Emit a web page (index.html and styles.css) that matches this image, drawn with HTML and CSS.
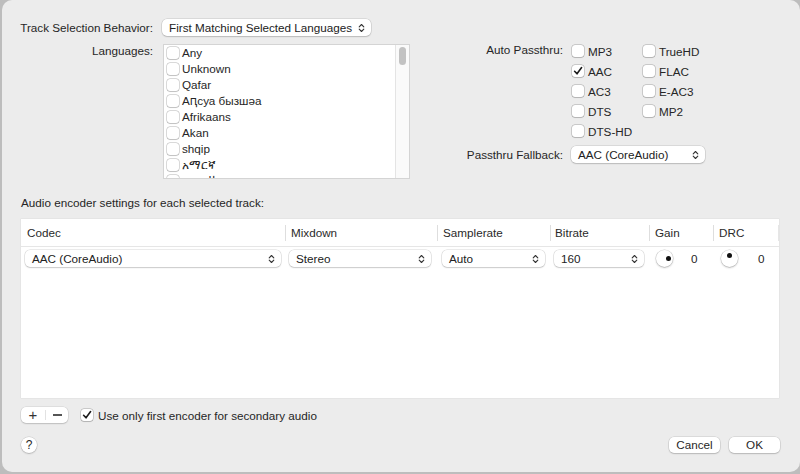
FILE: index.html
```html
<!DOCTYPE html>
<html>
<head>
<meta charset="utf-8">
<link rel="stylesheet" href="styles.css">
</head>
<body>
<div class="sheet">
  <div class="top">
    <div class="left">
      <div class="frow r1">
        <span class="lbl">Track Selection Behavior:</span>
        <div class="popup p-behavior"><span>First Matching Selected Languages</span>
          <svg class="chev" viewBox="0 0 7 10" width="7" height="10"><path d="M1.2 3.8 L3.5 1.5 L5.8 3.8 M1.2 6.2 L3.5 8.5 L5.8 6.2" fill="none" stroke="#333" stroke-width="1.1" stroke-linecap="round" stroke-linejoin="round"/></svg>
        </div>
      </div>
      <div class="frow r2">
        <span class="lbl">Languages:</span>
        <div class="listbox">
          <ul class="langs">
            <li><span class="cb"></span>Any</li>
            <li><span class="cb"></span>Unknown</li>
            <li><span class="cb"></span>Qafar</li>
            <li><span class="cb"></span>Aԥсуа бызшәа</li>
            <li><span class="cb"></span>Afrikaans</li>
            <li><span class="cb"></span>Akan</li>
            <li><span class="cb"></span>shqip</li>
            <li><span class="cb"></span>አማርኛ</li>
            <li class="partial"><span class="cb"></span>العربية</li>
          </ul>
          <div class="scroller"><div class="thumb"></div></div>
        </div>
      </div>
    </div>
    <div class="right">
      <div class="frow pass">
        <span class="lbl2">Auto Passthru:</span>
        <div class="passgrid">
          <label class="chk"><span class="cb"></span>MP3</label>
          <label class="chk"><span class="cb on"><svg viewBox="0 0 12 12" width="12" height="12"><path d="M2.6 6.3 L5 8.8 L9.6 2.6" fill="none" stroke="#1a1a1a" stroke-width="1.6" stroke-linecap="round" stroke-linejoin="round"/></svg></span>AAC</label>
          <label class="chk"><span class="cb"></span>AC3</label>
          <label class="chk"><span class="cb"></span>DTS</label>
          <label class="chk"><span class="cb"></span>DTS-HD</label>
          <label class="chk"><span class="cb"></span>TrueHD</label>
          <label class="chk"><span class="cb"></span>FLAC</label>
          <label class="chk"><span class="cb"></span>E-AC3</label>
          <label class="chk"><span class="cb"></span>MP2</label>
        </div>
      </div>
      <div class="frow fallback">
        <span class="lbl2">Passthru Fallback:</span>
        <div class="popup p-fallback"><span>AAC (CoreAudio)</span>
          <svg class="chev" viewBox="0 0 7 10" width="7" height="10"><path d="M1.2 3.8 L3.5 1.5 L5.8 3.8 M1.2 6.2 L3.5 8.5 L5.8 6.2" fill="none" stroke="#333" stroke-width="1.1" stroke-linecap="round" stroke-linejoin="round"/></svg>
        </div>
      </div>
    </div>
  </div>

  <div class="sect">Audio encoder settings for each selected track:</div>

  <div class="table">
    <div class="thead grid">
      <div class="th">Codec</div>
      <div class="th sep">Mixdown</div>
      <div class="th sep">Samplerate</div>
      <div class="th sep b">Bitrate</div>
      <div class="th sep">Gain</div>
      <div class="th sep last">DRC</div>
    </div>
    <div class="trow grid">
      <div class="td"><div class="popup w-codec"><span>AAC (CoreAudio)</span><svg class="chev" viewBox="0 0 7 10" width="7" height="10"><path d="M1.2 3.8 L3.5 1.5 L5.8 3.8 M1.2 6.2 L3.5 8.5 L5.8 6.2" fill="none" stroke="#333" stroke-width="1.1" stroke-linecap="round" stroke-linejoin="round"/></svg></div></div>
      <div class="td"><div class="popup w-mix"><span>Stereo</span><svg class="chev" viewBox="0 0 7 10" width="7" height="10"><path d="M1.2 3.8 L3.5 1.5 L5.8 3.8 M1.2 6.2 L3.5 8.5 L5.8 6.2" fill="none" stroke="#333" stroke-width="1.1" stroke-linecap="round" stroke-linejoin="round"/></svg></div></div>
      <div class="td"><div class="popup w-sr"><span>Auto</span><svg class="chev" viewBox="0 0 7 10" width="7" height="10"><path d="M1.2 3.8 L3.5 1.5 L5.8 3.8 M1.2 6.2 L3.5 8.5 L5.8 6.2" fill="none" stroke="#333" stroke-width="1.1" stroke-linecap="round" stroke-linejoin="round"/></svg></div></div>
      <div class="td"><div class="popup w-br"><span>160</span><svg class="chev" viewBox="0 0 7 10" width="7" height="10"><path d="M1.2 3.8 L3.5 1.5 L5.8 3.8 M1.2 6.2 L3.5 8.5 L5.8 6.2" fill="none" stroke="#333" stroke-width="1.1" stroke-linecap="round" stroke-linejoin="round"/></svg></div></div>
      <div class="td knobcell gain"><div class="knob"><span class="dot"></span></div><span class="val">0</span></div>
      <div class="td knobcell drc"><div class="knob"><span class="dot"></span></div><span class="val">0</span></div>
    </div>
  </div>

  <div class="below">
    <div class="seg"><span class="plus">+</span><span class="div"></span><span class="minus"></span></div>
    <label class="chk single"><span class="cb on"><svg viewBox="0 0 12 12" width="12" height="12"><path d="M2.6 6.3 L5 8.8 L9.6 2.6" fill="none" stroke="#1a1a1a" stroke-width="1.6" stroke-linecap="round" stroke-linejoin="round"/></svg></span>Use only first encoder for secondary audio</label>
  </div>

  <div class="footer">
    <div class="help">?</div>
    <div class="btns">
      <div class="btn">Cancel</div>
      <div class="btn">OK</div>
    </div>
  </div>
</div>
</body>
</html>
```
FILE: styles.css
```css
* { box-sizing: border-box; }
html, body { margin: 0; padding: 0; }
body {
  width: 800px;
  height: 474px;
  background: #bdbdbd;
  font-family: "Liberation Sans", Arial, "Noto Sans", sans-serif;
  font-size: 11.7px;
  color: #262626;
  overflow: hidden;
  white-space: nowrap;
}
.sheet {
  margin-left: 2px;
  width: 798px;
  height: 472px;
  background: #ececec;
  border-radius: 10px;
  padding: 19px 20px 0 19px;
}
.top { display: flex; }
.left { width: 389px; }
.frow { display: flex; align-items: flex-start; }
.lbl {
  flex: none;
  width: 132px;
  display: flex;
  justify-content: flex-end;
  margin-right: 9px;
  line-height: 17px;
}
.r2 { margin-top: 8px; }
.r2 .lbl { line-height: 14px; margin-right: 10px; }

.popup {
  position: relative;
  height: 17px;
  background: #fff;
  border-radius: 5px;
  box-shadow: 0 0 0 0.5px rgba(0,0,0,0.16), 0 1px 1.5px rgba(0,0,0,0.14);
  padding-left: 7px;
  line-height: 17px;
  display: flex;
  align-items: center;
  justify-content: space-between;
  padding-right: 6px;
  color: #222;
}
.chev { flex: none; }
.p-behavior { width: 209px; }
.p-fallback { width: 134px; }

.listbox {
  width: 248px;
  height: 135px;
  background: #fff;
  border: 1px solid #d4d4d4;
  display: flex;
  overflow: hidden;
}
.langs {
  list-style: none;
  margin: 0;
  padding: 0 0 0 3px;
  flex: 1;
}
.langs li {
  height: 16px;
  line-height: 16px;
  display: flex;
  align-items: center;
}
.langs li .cb { margin-right: 3px; }
.scroller {
  width: 14px;
  border-left: 1px solid #e4e4e4;
  background: #fafafa;
  padding: 2px 0 0 3px;
}
.thumb {
  width: 7px;
  height: 18px;
  border-radius: 4px;
  background: #c2c2c2;
}

.cb {
  display: inline-flex;
  flex: none;
  width: 12px;
  height: 12px;
  border-radius: 3px;
  background: #fff;
  box-shadow: 0 0 0 0.5px rgba(0,0,0,0.28), 0 0.5px 1px rgba(0,0,0,0.12);
}

.right { margin-left: 58px; margin-top: 22px; }
.lbl2 {
  flex: none;
  width: 95px;
  display: flex;
  justify-content: flex-end;
  margin-right: 8px;
}
.pass .lbl2 { line-height: 18px; }
.passgrid {
  display: grid;
  grid-template-rows: repeat(5, 20px);
  grid-template-columns: 71px auto;
  grid-auto-flow: column;
}
.chk {
  display: flex;
  align-items: center;
  height: 20px;
}
.chk .cb { margin-right: 5px; margin-left: 1px; }
.passgrid .chk .cb { margin-right: 4px; }
.fallback { margin-top: 5px; }
.fallback .lbl2 { line-height: 17px; }

.sect {
  margin-top: 16px;
  line-height: 16px;
}

.table {
  margin-top: 8px;
  width: 758px;
  height: 179px;
  background: #fff;
  box-shadow: 0 0 0 0.5px rgba(0,0,0,0.06);
}
.grid {
  display: grid;
  grid-template-columns: 264px 152px 113px 99px 64px 66px;
}
.thead {
  height: 28px;
  border-bottom: 1px solid #e6e6e6;
}
.th {
  position: relative;
  padding-left: 6px;
  line-height: 28px;
  color: #2a2a2a;
}
.th.b { padding-left: 5px; }
.th.sep::before {
  content: "";
  position: absolute;
  left: 0;
  top: 6px;
  height: 16px;
  width: 1px;
  background: #dedede;
}
.th.last::after {
  content: "";
  position: absolute;
  right: 0;
  top: 6px;
  height: 16px;
  width: 1px;
  background: #e6e6e6;
}
.trow { height: 26px; padding-top: 3px; }
.td { display: flex; }
.w-codec { margin-left: 4px; width: 256px; }
.w-mix { margin-left: 4px; width: 142px; }
.w-sr { margin-left: 5px; width: 103px; }
.w-br { margin-left: 4px; width: 90px; }
.knobcell { align-items: center; height: 17px; }
.knob {
  position: relative;
  width: 17px;
  height: 17px;
  border-radius: 50%;
  background: #fff;
  box-shadow: 0 0 0 0.5px rgba(0,0,0,0.18), 0 1px 2px rgba(0,0,0,0.22);
  flex: none;
}
.dot {
  position: absolute;
  width: 5px;
  height: 5px;
  border-radius: 50%;
  background: #111;
}
.gain .knob { margin-left: 7px; }
.gain .dot { left: 10px; top: 6px; }
.gain .val { margin-left: 18px; }
.drc .knob { margin-left: 8px; }
.drc .dot { left: 6px; top: 3px; }
.drc .val { margin-left: 20px; }

.below {
  display: flex;
  align-items: center;
  margin-top: 9px;
  height: 16px;
}
.seg {
  width: 47px;
  height: 16px;
  background: #fff;
  border-radius: 5px;
  box-shadow: 0 0 0 0.5px rgba(0,0,0,0.12), 0 1px 1.5px rgba(0,0,0,0.14);
  display: flex;
  align-items: center;
  margin-right: 13px;
}
.plus {
  width: 24px;
  text-align: center;
  font-size: 15px;
  line-height: 16px;
  color: #333;
}
.seg .div { width: 1px; height: 10px; background: #e2e2e2; }
.minus {
  width: 9px;
  height: 1.3px;
  background: #555;
  margin-left: 7px;
}
.single .cb { margin-left: 0; margin-right: 5px; }

.footer {
  display: flex;
  justify-content: space-between;
  align-items: center;
  margin-top: 14px;
  height: 16px;
}
.help {
  width: 16px;
  height: 16px;
  border-radius: 50%;
  background: #fff;
  box-shadow: 0 0 0 0.5px rgba(0,0,0,0.15), 0 1px 1.5px rgba(0,0,0,0.18);
  text-align: center;
  line-height: 16px;
  font-size: 12px;
}
.btns { display: flex; gap: 9px; }
.btn {
  width: 51px;
  height: 16px;
  background: #fff;
  border-radius: 5px;
  box-shadow: 0 0 0 0.5px rgba(0,0,0,0.14), 0 1px 1.5px rgba(0,0,0,0.16);
  text-align: center;
  line-height: 16px;
}
```
